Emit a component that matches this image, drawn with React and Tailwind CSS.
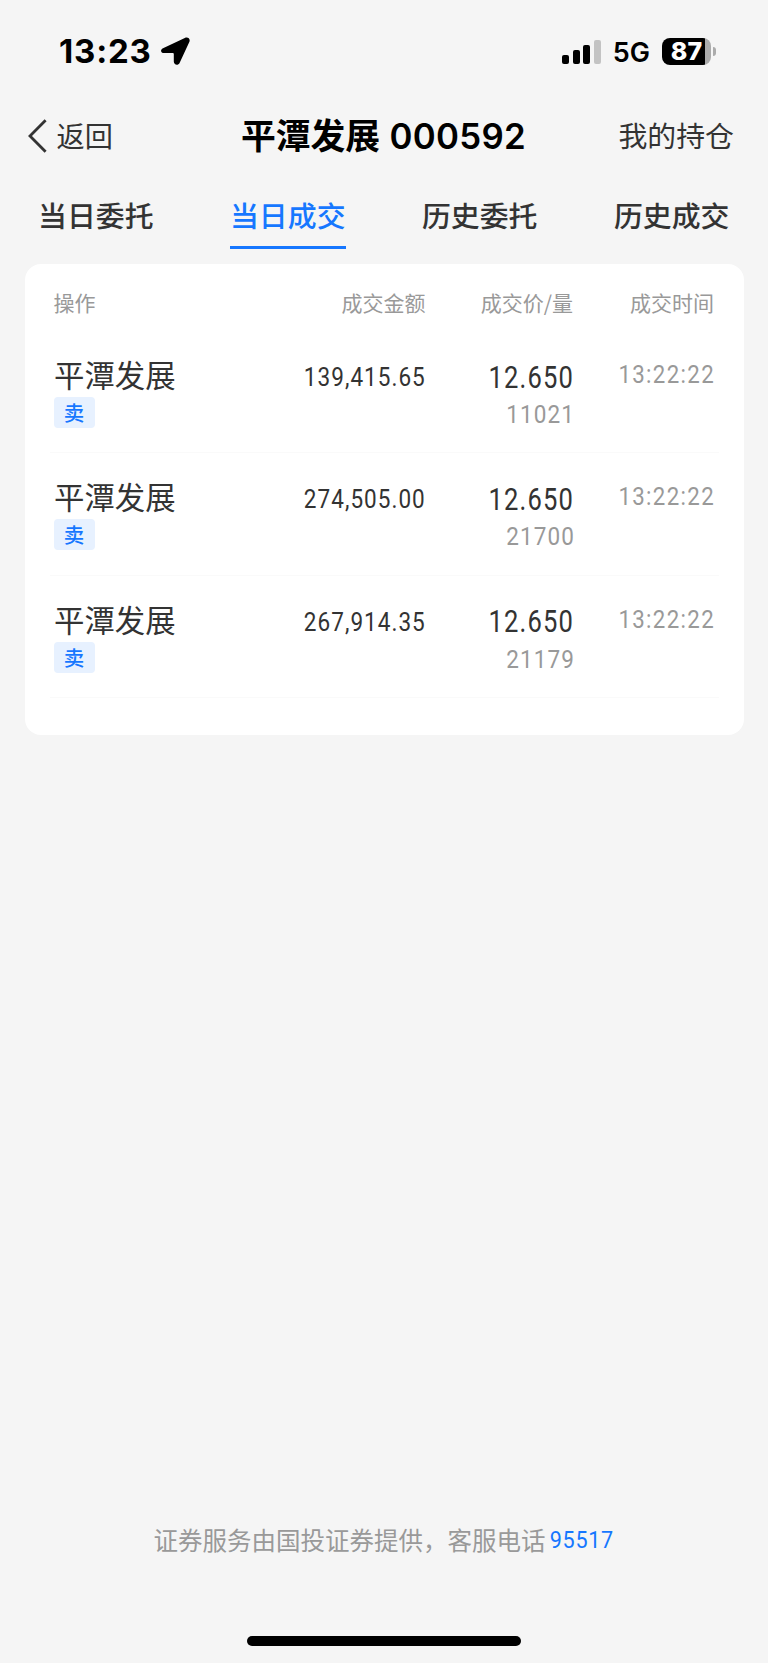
import React from 'react';

const trades = [
  { id: 1, name: '平潭发展', side: '卖', amount: '139,415.65', price: '12.650', volume: '11021', time: '13:22:22' },
  { id: 2, name: '平潭发展', side: '卖', amount: '274,505.00', price: '12.650', volume: '21700', time: '13:22:22' },
  { id: 3, name: '平潭发展', side: '卖', amount: '267,914.35', price: '12.650', volume: '21179', time: '13:22:22' },
];

const tabs = ['当日委托', '当日成交', '历史委托', '历史成交'];

function StatusBar() {
  return (
    <div className="flex h-[102px] items-center pl-[59px] pr-[52px] font-['Inter',sans-serif] text-black">
      <span className="mt-[1px] text-[33px] font-bold leading-none tracking-[0.8px]">13:23</span>
      <svg className="ml-[9px] h-[28px] w-[29px]" viewBox="0 0 29 28" fill="currentColor">
        <path d="M2 11.200 23.800.9C27-.6 29.700 2 28.300 5.100L18.700 25.700c-1.500 3.200-5.900 2.400-5.900-1.200V17.300c0-.8-.4-1.200-1.200-1.200H3.200C-.3 16.100-1.100 12.700 2 11.200Z" />
      </svg>
      <div className="ml-auto flex items-center">
        <div className="flex h-[25px] items-end gap-[3.500px]">
          <div className="h-[9px] w-[7px] rounded-[2px] bg-black" />
          <div className="h-[14px] w-[7px] rounded-[2px] bg-black" />
          <div className="h-[19px] w-[7px] rounded-[2px] bg-black" />
          <div className="h-[24px] w-[7px] rounded-[2px] bg-[#c3c3c3]" />
        </div>
        <span className="ml-[12px] mt-[2px] text-[27px] font-semibold leading-none">5G</span>
        <div className="ml-[12px] flex h-[27px] w-[49px] items-center justify-center rounded-[8px] bg-linear-to-r from-black from-[88%] to-[#ababab] to-[88%]">
          <span className="text-[25px] font-extrabold leading-none text-white">87</span>
        </div>
        <div className="ml-[2px] h-[9px] w-[3px] rounded-r-full bg-[#ababab]" />
      </div>
    </div>
  );
}

function NavBar() {
  return (
    <div className="flex h-[68px] items-center justify-between pl-[28px] pr-[34px] text-[#333]">
      <div className="flex w-[165px] items-center">
        <svg className="h-[34px] w-[19px]" viewBox="0 0 19 34" fill="none" stroke="currentColor" strokeWidth="2.800">
          <path d="M17.600 1.200 2 17l15.600 15.800" />
        </svg>
        <span className="mb-[2px] ml-[9.500px] text-[28.200px] leading-none">返回</span>
      </div>
      <h1 className="flex items-center whitespace-nowrap text-[34.800px] font-bold leading-none text-black">
        <span className="mb-[3px]">平潭发展</span>
        <span className="ml-[9.500px] font-['Inter',sans-serif] font-semibold tracking-[0.300px]">000592</span>
      </h1>
      <span className="mb-[3px] w-[160px] text-right text-[28.900px] leading-none">我的持仓</span>
    </div>
  );
}

function Num({ className, children }) {
  return (
    <span className={`inline-block origin-right whitespace-nowrap font-['Roboto',sans-serif] leading-none ${className}`}>
      {children}
    </span>
  );
}

function TradeRow({ trade }) {
  return (
    <div className="grid h-[122.400px] grid-cols-[222px_150px_147.500px_140.500px] border-b border-[#fafafa] px-[4.500px] text-[#333]">
      <div className="flex flex-col items-start pt-[26px]">
        <span className="text-[30.400px] leading-[34px]">{trade.name}</span>
        <span className="-ml-[0.500px] mt-[6px] flex h-[31px] w-[41px] items-center justify-center rounded-[4px] bg-[#e7f1ff] pb-[1px] text-[20.500px] font-medium leading-none text-[#1677ff]">
          {trade.side}
        </span>
      </div>
      <div className="pt-[33px] text-right">
        <Num className="scale-x-[0.86] text-[26.200px] tracking-[1.200px]">{trade.amount}</Num>
      </div>
      <div className="-mr-[1px] flex flex-col items-end pt-[31.500px]">
        <Num className="scale-x-[0.83] text-[30.800px] tracking-[1.400px]">{trade.price}</Num>
        <Num className="mt-[7.500px] scale-x-[0.85] text-[26.500px] tracking-[1.300px] text-[#999]">{trade.volume}</Num>
      </div>
      <div className="-mr-[1px] pt-[30px] text-right">
        <Num className="scale-x-[0.84] text-[26.500px] tracking-[1.600px] text-[#999]">{trade.time}</Num>
      </div>
    </div>
  );
}

export default function App() {
  return (
    <div className="flex h-[1663px] w-[768px] flex-col bg-[#f5f5f5] font-['Noto_Sans_CJK_SC',sans-serif]">
      <StatusBar />
      <NavBar />
      <nav className="flex h-[94px] items-start justify-between pl-[38px] pr-[38.500px] pt-[25px]">
        {tabs.map((tab, i) => (
          <span
            key={tab}
            className={`h-[54px] border-b-[3px] pt-[1px] text-[28.900px] font-medium leading-[36px] ${
              i === 1 ? 'border-[#1677ff] text-[#1677ff]' : 'border-transparent text-[#333]'
            }`}
          >
            {tab}
          </span>
        ))}
      </nav>
      <main className="mx-[24.500px] h-[471px] rounded-[16px] bg-white px-[25px]">
        <div className="grid h-[67px] grid-cols-[221.500px_150px_147.500px_141px] items-center px-[4.500px] pt-[9px] text-[21px] leading-none text-[#999]">
          <span className="-ml-[0.500px]">操作</span>
          <span className="text-right">成交金额</span>
          <span className="text-right">成交价/量</span>
          <span className="text-right">成交时间</span>
        </div>
        {trades.map((t) => (
          <TradeRow key={t.id} trade={t} />
        ))}
      </main>
      <footer className="mt-auto flex flex-col items-center">
        <p className="flex items-center pr-[1px] text-[24.500px] leading-[30px] text-[#999]">
          证券服务由国投证券提供，客服电话
          <Num className="-ml-[5px] scale-x-[0.88] text-[24.500px] tracking-[0.800px] text-[#1677ff]">95517</Num>
        </p>
        <div className="mb-[17px] mt-[81px] h-[10px] w-[274px] rounded-full bg-black" />
      </footer>
    </div>
  );
}
